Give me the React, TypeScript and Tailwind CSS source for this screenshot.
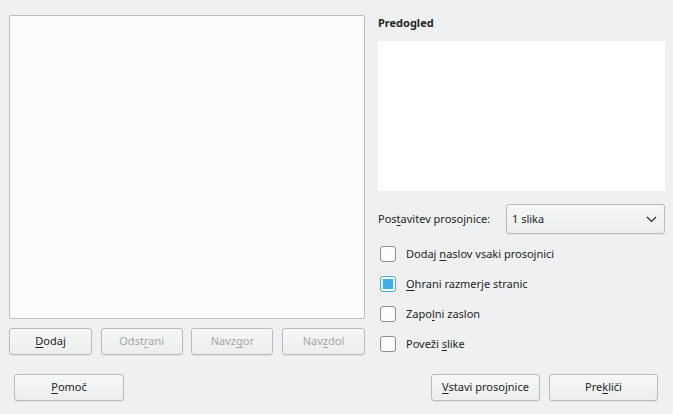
import React from 'react'

function Btn({ children, disabled, className = '' }: { children: React.ReactNode; disabled?: boolean; className?: string }) {
  return (
    <button
      className={`h-[27px] rounded-[3px] border border-[#b9bbbd] bg-gradient-to-b from-[#f6f7f7] to-[#eceded] text-[11px] shadow-[0_1px_1px_rgba(0,0,0,0.06)] ${disabled ? 'text-[#a4a6a8]' : 'text-[#232627]'} ${className}`}
    >
      {children}
    </button>
  )
}

function Mn({ children }: { children: React.ReactNode }) {
  return <span className="underline decoration-1 underline-offset-[2px]">{children}</span>
}

function Check({ checked, children }: { checked?: boolean; children: React.ReactNode }) {
  return (
    <div className="flex h-[16px] items-center gap-[10px] pl-[2px]">
      <div
        className={`flex h-[16px] w-[16px] items-center justify-center rounded-[3px] border bg-[#fcfcfc] ${checked ? 'border-[#3daee9]' : 'border-[#8a8c8e]'}`}
      >
        {checked && <div className="h-[10px] w-[10px] bg-[#3daee9]" />}
      </div>
      <span className="text-[11px] text-[#232627]">{children}</span>
    </div>
  )
}

export default function App() {
  return (
    <div className="flex h-[414px] w-[673px] flex-col bg-[#eff0f1] font-['Noto_Sans',sans-serif] text-[#232627]">
      <div className="flex gap-[13px] pl-[9px] pr-[8px] pt-[15px]">
        <div className="flex w-[356px] flex-col gap-[9px]">
          <div className="h-[304px] rounded-[2px] border border-[#b9bbbd] bg-[#fcfcfc]" />
          <div className="flex justify-between">
            <Btn className="w-[83px]">
              <Mn>D</Mn>odaj
            </Btn>
            <Btn disabled className="w-[82px]">
              Odst<Mn>r</Mn>ani
            </Btn>
            <Btn disabled className="w-[82px]">
              Navz<Mn>g</Mn>or
            </Btn>
            <Btn disabled className="w-[83px]">
              Nav<Mn>z</Mn>dol
            </Btn>
          </div>
        </div>
        <div className="flex flex-1 flex-col">
          <div className="h-[26px] pt-[1px] text-[11px] font-bold leading-[13px]">Predogled</div>
          <div className="h-[150px] bg-white" />
          <div className="mt-[13px] flex h-[30px] items-center justify-between">
            <span className="text-[11px]">
              Pos<Mn>t</Mn>avitev prosojnice:
            </span>
            <div className="flex h-[30px] w-[159px] items-center justify-between rounded-[3px] border border-[#b9bbbd] bg-gradient-to-b from-[#f6f7f7] to-[#eceded] pl-[5px] pr-[7px] text-[11px] shadow-[0_1px_1px_rgba(0,0,0,0.06)]">
              <span>1 slika</span>
              <svg width="11" height="7" viewBox="0 0 11 7" fill="none" stroke="#232627" strokeWidth="1.1">
                <path d="M1 1l4.5 4.5L10 1" />
              </svg>
            </div>
          </div>
          <div className="mt-[12px] flex flex-col gap-[14px]">
            <Check>
              Dodaj <Mn>n</Mn>aslov vsaki prosojnici
            </Check>
            <Check checked>
              <Mn>O</Mn>hrani razmerje stranic
            </Check>
            <Check>
              Zapo<Mn>l</Mn>ni zaslon
            </Check>
            <Check>
              Poveži <Mn>s</Mn>like
            </Check>
          </div>
        </div>
      </div>
      <div className="mt-[19px] flex pl-[14px] pr-[15px]">
        <Btn className="w-[110px]">
          <Mn>P</Mn>omoč
        </Btn>
        <div className="flex-1" />
        <div className="flex gap-[9px]">
          <Btn className="w-[109px]">
            <Mn>V</Mn>stavi prosojnice
          </Btn>
          <Btn className="w-[109px]">
            Pre<Mn>k</Mn>liči
          </Btn>
        </div>
      </div>
    </div>
  )
}
